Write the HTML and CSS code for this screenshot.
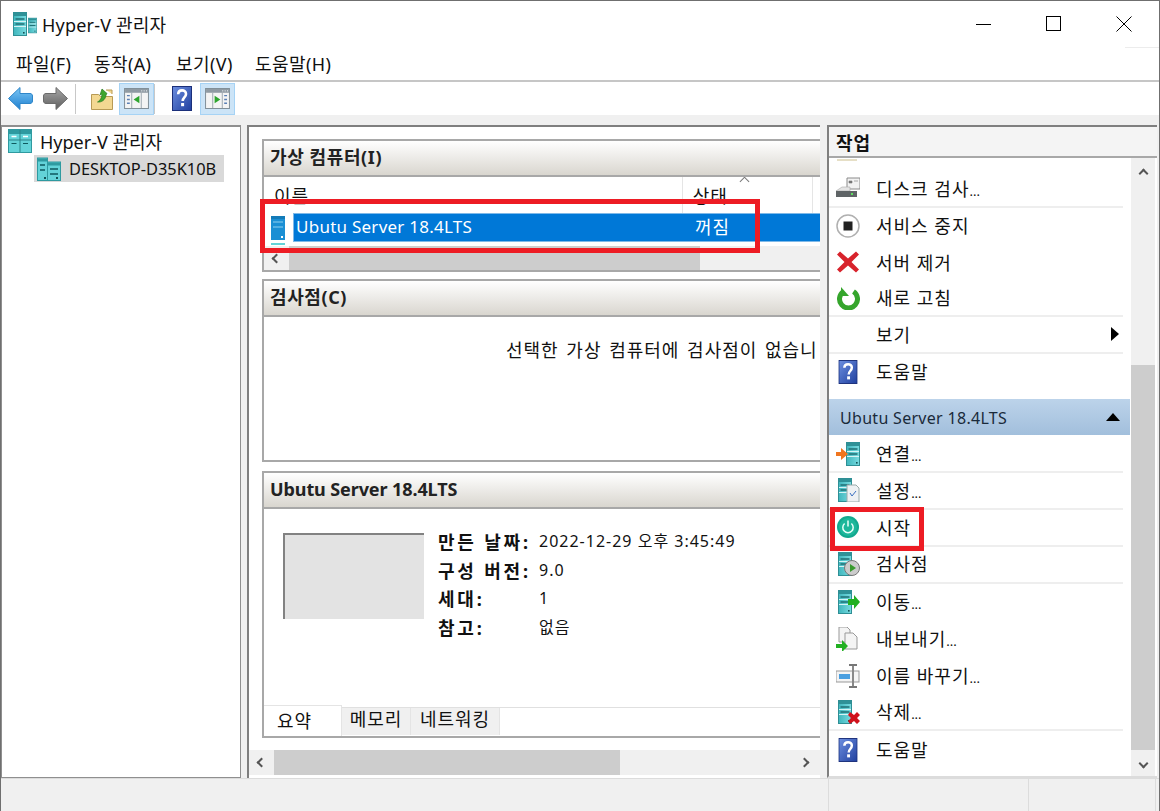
FILE: index.html
```html
<!DOCTYPE html>
<html lang="ko">
<head>
<meta charset="utf-8">
<title>Hyper-V 관리자</title>
<link rel="stylesheet" href="styles.css">
</head>
<body>
<svg class="defs" width="0" height="0" aria-hidden="true">
  <defs>
    <linearGradient id="teal" x1="0" y1="0" x2="1" y2="0"><stop offset="0" stop-color="#3fb6bd"/><stop offset="1" stop-color="#79dbe0"/></linearGradient>
    <linearGradient id="help" x1="0" y1="0" x2="1" y2="1"><stop offset="0" stop-color="#6d8fe0"/><stop offset="1" stop-color="#1f3f9e"/></linearGradient>
    <linearGradient id="blueArrow" x1="0" y1="0" x2="0" y2="1"><stop offset="0" stop-color="#7cc7f5"/><stop offset="1" stop-color="#1e7fd0"/></linearGradient>
    <linearGradient id="grayArrow" x1="0" y1="0" x2="0" y2="1"><stop offset="0" stop-color="#a8a8a8"/><stop offset="1" stop-color="#5e5e5e"/></linearGradient>
    <symbol id="srv" viewBox="0 0 14 24">
      <rect x=".5" y=".5" width="13" height="23" fill="url(#teal)" stroke="#2f8f95"/>
      <rect x="1" y="1" width="12" height="3" fill="#2f9197"/>
      <path d="M2.500 7h9M2.500 12h9" stroke="#1f6f74" stroke-width="1.500"/>
      <path d="M1 9.500h12M1 14.500h12" stroke="#d6f3f5"/>
      <rect x="10" y="20" width="1.600" height="1.600" fill="#145256"/>
    </symbol>
    <symbol id="help-i" viewBox="0 0 20 25">
      <rect x=".5" y=".5" width="19" height="24" fill="url(#help)" stroke="#1b2f7a"/>
      <path d="M6.200 8.200c0-5 7.800-5 7.800-.3 0 3.500-3.300 3.600-3.300 7.100" fill="none" stroke="#fff" stroke-width="2.600"/>
      <rect x="9.100" y="17" width="3" height="3.200" fill="#fff"/>
    </symbol>
    <symbol id="pane" viewBox="0 0 26 22">
      <rect x=".5" y=".5" width="25" height="21" fill="#f4f4f4" stroke="#7d8a94"/>
      <rect x="1" y="1" width="24" height="4" fill="#8f9aa3"/>
      <path d="M18 3h1M20.500 3h1M23 3h1" stroke="#fff"/>
      <path d="M8 5v16M18 5v16" stroke="#9aa6ae"/>
    </symbol>
    <symbol id="hv" viewBox="0 0 24 24">
      <rect x=".5" y=".5" width="23" height="23" fill="#63d3d8" stroke="#2f9aa0"/>
      <rect x="1" y="1" width="22" height="4" fill="#2f9aa0"/>
      <path d="M12 1v22M1 11h22" stroke="#2c8489"/>
      <path d="M3.500 7.500h5M15 7.500h5" stroke="#fff" stroke-width="1.500"/>
      <path d="M3.500 14.500h5M15 14.500h5" stroke="#0f5a5f" stroke-width="1.200"/>
    </symbol>
    <symbol id="host" viewBox="0 0 24 24">
      <rect x=".5" y="1" width="10" height="22.500" fill="#63d3d8" stroke="#2f9aa0"/>
      <rect x="10.500" y="5" width="13" height="18.500" fill="#63d3d8" stroke="#2f9aa0"/>
      <rect x="1" y="1.500" width="9" height="3" fill="#2f9aa0"/>
      <rect x="11" y="5.500" width="12" height="3" fill="#2f9aa0"/>
      <path d="M3 8h5M3 13h5M13 12h8M13 17h8" stroke="#0f5a5f" stroke-width="1.300"/>
      <rect x="7" y="20" width="2" height="2" fill="#145256"/><rect x="19" y="20" width="2" height="2" fill="#145256"/>
    </symbol>
  </defs>
</svg>

<div class="window">
  <header class="titlebar">
    <svg class="app-icon" viewBox="0 0 24 24"><use href="#srv" x="0" y="0" width="14" height="24"/><use href="#srv" x="15" y="4" width="9" height="19"/></svg>
    <span class="title">Hyper-V 관리자</span>
    <div class="winbtns">
      <svg class="wb" viewBox="0 0 16 16"><path d="M0 8.500h15" stroke="#000"/></svg>
      <svg class="wb" viewBox="0 0 16 16"><rect x=".5" y=".5" width="14" height="14" fill="none" stroke="#000"/></svg>
      <svg class="wb" viewBox="0 0 16 16"><path d="M.5.500l15 15M15.500.500l-15 15" stroke="#000" fill="none"/></svg>
    </div>
  </header>
  <nav class="menubar">
    <span class="menu">파일(F)</span><span class="menu">동작(A)</span><span class="menu">보기(V)</span><span class="menu">도움말(H)</span>
  </nav>
  <div class="toolbar">
    <span class="tool"><svg class="t-arrow" viewBox="0 0 25 23"><path d="M12 .5L.5 11.500 12 22.500v-6h10c1.500 0 2.500-1 2.500-2.500V9c0-1.500-1-2.500-2.500-2.500H12z" fill="url(#blueArrow)" stroke="#2f86c9"/></svg></span>
    <span class="tool tool-fwd"><svg class="t-arrow" viewBox="0 0 25 23"><path d="M13 .5l11.500 11L13 22.500v-6H3c-1.500 0-2.500-1-2.500-2.500V9c0-1.500 1-2.500 2.500-2.500h10z" fill="url(#grayArrow)" stroke="#6b6b6b"/></svg></span>
    <span class="sep sep-a"></span>
    <span class="tool tool-up"><svg class="t-folder" viewBox="0 0 22 23"><path d="M.5 7.500h7l2 2h12v13H.5z" fill="#f3d892" stroke="#b89a55"/><path d="M15 3h6v4" fill="#f3d892" stroke="#b89a55"/><path d="M16 6.500L11 2 9 8l1.500-1c1 2-.5 6-4 8 4 .5 8-2 8.500-7z" fill="#3fa52f" stroke="#2a7a20" stroke-width=".7"/></svg></span>
    <span class="tool-on"><svg class="t-pane" viewBox="0 0 26 22"><use href="#pane"/><path d="M16 8v8l-6-4z" fill="#2ea52e"/><path d="M3 8h3M3 12h3M3 16h3" stroke="#5b80b5" stroke-width="1.500"/></svg></span>
    <span class="sep"></span>
    <span class="tool tool-help"><svg class="t-help" viewBox="0 0 20 25"><use href="#help-i"/></svg></span>
    <span class="tool-on"><svg class="t-pane" viewBox="0 0 26 22"><use href="#pane"/><path d="M10 8v8l6-4z" fill="#2ea52e"/><path d="M20 8h3M20 12h3M20 16h3" stroke="#5b80b5" stroke-width="1.500"/></svg></span>
  </div>

  <div class="workspace">
    <aside class="tree">
      <div class="tree-root"><svg class="tree-icon" viewBox="0 0 24 24"><use href="#hv"/></svg><span>Hyper-V 관리자</span></div>
      <div class="tree-host"><svg class="tree-icon" viewBox="0 0 24 24"><use href="#host"/></svg><span>DESKTOP-D35K10B</span></div>
    </aside>

    <main class="center">
      <div class="center-scroll">
        <section class="card card-vm">
          <h2 class="card-head">가상 컴퓨터(I)</h2>
          <div class="vm-cols"><span class="col col-name">이름</span><span class="col col-state">상태<i class="sort"></i></span><span class="col col-rest"></span></div>
          <div class="vm-row">
            <svg class="vm-icon" viewBox="0 0 14 30"><rect x="0" y="1" width="14" height="24" fill="#1b8fd4"/><rect x="0" y="1" width="14" height="3" fill="#137bb8"/><path d="M2 7h10M2 12h10" stroke="#8fd0f0"/><rect x="10" y="21" width="2" height="2" fill="#fff"/><rect x="0" y="28" width="14" height="2" fill="#63d3d8"/></svg>
            <div class="vm-sel"><span class="vm-name">Ubutu Server 18.4LTS</span><span class="vm-state">꺼짐</span></div>
          </div>
          <div class="hscroll hscroll-vm"><span class="arrow"><i class="chev chev-l"></i></span><span class="thumb thumb-vm"></span></div>
        </section>
        <section class="card card-check">
          <h2 class="card-head">검사점(C)</h2>
          <div class="check-body"><span>선택한 가상 컴퓨터에 검사점이 없습니</span></div>
        </section>
        <section class="card card-detail">
          <h2 class="card-head head-latin">Ubutu Server 18.4LTS</h2>
          <div class="detail-body">
            <div class="thumbnail"></div>
            <dl class="facts">
              <dt>만든 날짜:</dt><dd>2022-12-29 오후 3:45:49</dd>
              <dt>구성 버전:</dt><dd>9.0</dd>
              <dt>세대:</dt><dd>1</dd>
              <dt>참고:</dt><dd>없음</dd>
            </dl>
          </div>
          <div class="tabs"><span class="tab tab-on">요약</span><span class="tab tab-mem">메모리</span><span class="tab tab-net">네트워킹</span></div>
        </section>
      </div>
      <div class="hscroll hscroll-main"><span class="arrow"><i class="chev chev-l"></i></span><span class="thumb thumb-main"></span><span class="arrow arrow-r"><i class="chev chev-r"></i></span></div>
    </main>

    <aside class="actions">
      <h2 class="actions-head">작업</h2>
      <div class="actions-body">
        <div class="action-list">
          <div class="action line"><svg class="a-icon" viewBox="0 0 24 24"><path d="M11 2h13v11H11z" fill="#f2f2f2" stroke="#8a8a8a"/><path d="M13 5h3v2h-3zM18 5h4" fill="#777" stroke="#777" stroke-width=".6"/><path d="M6 11h8v4H0z" fill="#e4e4e4" stroke="#aaa" stroke-width=".6"/><rect y="15" width="21" height="6" fill="#5f6466"/><rect x="15" y="17" width="2" height="2" fill="#5fe05f"/></svg><span class="a-text">디스크 검사<span class="dots">...</span></span></div>
          <div class="action"><svg class="a-icon" viewBox="0 0 24 24"><circle cx="12" cy="12" r="11" fill="#fff" stroke="#b0b0b0" stroke-width="1.500"/><rect x="7.500" y="7.500" width="9" height="9" fill="#222"/></svg><span class="a-text">서비스 중지</span></div>
          <div class="action"><svg class="a-icon" viewBox="0 0 24 24"><path d="M4 1.500l8 7 8-7 3 3-7.500 7.500 7.500 7.500-3 3-8-7-8 7-3-3L8.500 12 1 4.500z" fill="#d8232c"/></svg><span class="a-text">서버 제거</span></div>
          <div class="action line"><svg class="a-icon" viewBox="0 0 24 24"><path d="M7.500 5.500a9 9 0 1 0 10 0" fill="none" stroke="#35a52c" stroke-width="5"/><path d="M5 1v9h8z" fill="#35a52c"/></svg><span class="a-text">새로 고침</span></div>
          <div class="action line"><span class="no-icon"></span><span class="a-text">보기</span><i class="caret"></i></div>
          <div class="action"><svg class="a-icon a-help" viewBox="0 0 20 25"><use href="#help-i"/></svg><span class="a-text">도움말</span></div>
        </div>
        <div class="group-head"><span>Ubutu Server 18.4LTS</span><i class="caret-up"></i></div>
        <div class="action-list list-vm">
          <div class="action line"><svg class="a-icon" viewBox="0 0 24 24"><use href="#srv" x="10" y="0" width="14" height="24"/><path d="M0 10h5V6l7 6-7 6v-4H0z" fill="#f0761f"/></svg><span class="a-text">연결<span class="dots">...</span></span></div>
          <div class="action line"><svg class="a-icon" viewBox="0 0 24 24"><use href="#srv" x="2" y="0" width="14" height="24"/><path d="M11 7h9l3 3v14H11z" fill="#eef1f3" stroke="#9aa"/><path d="M14 15l2 3 4-5" stroke="#3a6fc0" fill="none"/></svg><span class="a-text">설정<span class="dots">...</span></span></div>
          <div class="action line"><svg class="a-icon" viewBox="0 0 24 24"><circle cx="12" cy="12" r="11" fill="#12a88e"/><circle cx="12" cy="12" r="9" fill="#1db79b"/><path d="M8.600 8.500a5.200 5.200 0 1 0 6.800 0M12 5.500v6" fill="none" stroke="#e8fff9" stroke-width="1.500"/></svg><span class="a-text">시작</span></div>
          <div class="action line"><svg class="a-icon" viewBox="0 0 24 24"><use href="#srv" x="2" y="0" width="14" height="24"/><circle cx="16" cy="16" r="7.500" fill="#ccc" stroke="#777"/><path d="M14 12l6 4-6 4z" fill="#3a9a2e"/></svg><span class="a-text">검사점</span></div>
          <div class="action"><svg class="a-icon" viewBox="0 0 24 24"><use href="#srv" x="2" y="0" width="14" height="24"/><path d="M12 9h6V5l6 7-6 7v-4h-6z" fill="#22b022"/></svg><span class="a-text">이동<span class="dots">...</span></span></div>
          <div class="action"><svg class="a-icon" viewBox="0 0 24 24"><path d="M3 0h8l3 3v12H3z" fill="#f4f4f4" stroke="#999"/><path d="M9 6h8l4 4v12H9z" fill="#f4f4f4" stroke="#999"/><path d="M0 17h6v-4l6 6-6 6v-4H0z" fill="#22b022"/></svg><span class="a-text">내보내기<span class="dots">...</span></span></div>
          <div class="action"><svg class="a-icon" viewBox="0 0 24 24"><rect x="0" y="7" width="23" height="11" fill="#f4f4f4" stroke="#999"/><rect x="3" y="10" width="11" height="5" fill="#4a9fe0"/><path d="M17 1v22" stroke="#888" stroke-width="2"/><path d="M13 0h8v2h-8zM13 22h8v2h-8z" fill="#777"/></svg><span class="a-text">이름 바꾸기<span class="dots">...</span></span></div>
          <div class="action line"><svg class="a-icon" viewBox="0 0 24 24"><use href="#srv" x="2" y="0" width="14" height="24"/><path d="M14 12l4 3 3-3 3 3-3 3 3 3-3 3-3-3-4 3-2-3 3-3-3-3z" fill="#d0121c"/></svg><span class="a-text">삭제<span class="dots">...</span></span></div>
          <div class="action"><svg class="a-icon a-help" viewBox="0 0 20 25"><use href="#help-i"/></svg><span class="a-text">도움말</span></div>
        </div>
        <div class="vscroll"><span class="v-arrow"><i class="chev chev-u"></i></span><span class="v-thumb"></span><span class="v-arrow v-down"><i class="chev chev-d"></i></span></div>
      </div>
    </aside>
  </div>

  <footer class="statusbar"><span class="st st-a"></span><span class="st st-b"></span><span class="st st-c"></span></footer>
  <span class="mark mark-vm"></span>
  <span class="mark mark-start"></span>
</div>
</body>
</html>
```
FILE: styles.css
```css
* { box-sizing: border-box; }
html, body { margin: 0; padding: 0; background: #fff; }
body { font: 18px/1.2 "Noto Sans", "Noto Sans CJK KR", sans-serif; color: #111; overflow: hidden; }
.defs { position: absolute; }
.window { position: relative; width: 1160px; height: 811px; display: flex; flex-direction: column; border: 1px solid #6f6f6f; border-bottom: 0; background: #fff; overflow: hidden; }

.titlebar { height: 47px; flex: none; display: flex; align-items: center; padding-left: 12px; position: relative; }
.titlebar::after { content: ""; position: absolute; right: 0; bottom: 0; width: 34px; height: 1px; background: #ececec; }
.app-icon { width: 24px; height: 24px; margin-top: -1px; }
.title { margin-left: 5px; font-size: 18px; letter-spacing: .2px; padding-top: 2px; }
.winbtns { margin-left: auto; display: flex; gap: 54px; padding-right: 27px; padding-bottom: 1px; }
.wb { width: 16px; height: 16px; }

.menubar { height: 34px; flex: none; display: flex; align-items: center; padding: 2px 0 0 15px; border-bottom: 2px solid #c6c6c6; }
.menu { width: 78px; font-size: 18px; letter-spacing: .4px; }
.menu:nth-child(2) { width: 82px; }
.menu:nth-child(3) { width: 79px; }

.toolbar { height: 33px; flex: none; display: flex; align-items: center; padding-left: 7px; }
.tool { display: flex; }
.t-arrow { width: 25px; height: 23px; display: block; }
.tool-fwd { margin-left: 10px; }
.tool-up { margin-left: 15px; margin-right: 6px; }
.tool-help { margin-left: 17px; margin-right: 8px; }
.t-folder { width: 22px; height: 23px; }
.t-help { width: 20px; height: 25px; }
.t-pane { width: 25px; height: 21px; }
.sep { width: 1px; height: 30px; background: #c8c8c8; }
.sep-a { margin-left: 7px; }
.tool-on { width: 35px; height: 32px; display: flex; align-items: center; justify-content: center; background: #cce4f7; border: 1px solid #a6d3f5; }

.workspace { flex: 1; min-height: 0; display: flex; background: #f0f0f0; padding-top: 10px; }
.tree { width: 240px; flex: none; background: #fff; border: 1px solid #8f8f8f; border-top-width: 2px; border-bottom-color: #8f8f8f; }
.tree-root { height: 28px; display: flex; align-items: center; gap: 8px; padding-left: 6px; }
.tree-root span { padding-top: 3px; }
.tree-host { height: 27px; width: 190px; margin-left: 32px; display: flex; align-items: center; gap: 8px; padding-left: 3px; background: #d9d9d9; font-size: 16.4px; }
.tree-icon { width: 24px; height: 24px; flex: none; }

.center { width: 573px; margin-left: 6px; flex: none; display: flex; flex-direction: column; background: #fff; border-top: 2px solid #7f7f7f; border-left: 2px solid #7f7f7f; overflow: hidden; }
.center-scroll { flex: 1; min-height: 0; padding: 12px 0 0 13px; }
.card { border: 2px solid #a8a8a8; border-right: 0; width: 562px; background: #fff; }
.card-head { margin: 0; height: 36px; display: flex; align-items: center; padding-left: 6px; font-size: 18px; font-weight: 700; letter-spacing: .6px; color: #222; background: linear-gradient(#fff, #d9d6cf); border-bottom: 2px solid #a8a8a8; }
.head-latin { letter-spacing: -.1px; }
.card-vm { height: 133px; overflow: hidden; }
.vm-cols { height: 36px; display: flex; overflow: hidden; }
.col { display: block; padding: 7px 0 0 10px; position: relative; border-right: 1px solid #e5e5e5; height: 36px; letter-spacing: 1px; }
.col-name, .col-state { padding-top: 9px; }
.col-name { width: 421px; }
.col-state { width: 131px; }
.sort { position: absolute; left: 58px; top: 1px; width: 7px; height: 7px; border-left: 1px solid #777; border-top: 1px solid #777; transform: rotate(45deg); }
.vm-row { height: 33px; display: flex; }
.vm-icon { width: 14px; height: 30px; margin: 2px 8px 0 7px; flex: none; }
.vm-sel { flex: 1; height: 29px; background: #0078d7; color: #fff; display: flex; align-items: center; border: 1px solid #7fb9e8; border-right: 0; font-size: 17px; letter-spacing: .25px; }
.vm-name { width: 401px; padding-left: 2px; flex: none; }
.vm-state { font-size: 18px; letter-spacing: 1px; }
.hscroll { display: flex; align-items: center; background: #f0f0f0; position: relative; }
.hscroll-vm { height: 24px; }
.arrow { width: 25px; height: 100%; flex: none; display: flex; align-items: center; justify-content: center; }
.chev { display: block; width: 7px; height: 7px; border: solid #555; border-width: 2px 0 0 2px; }
.chev-l { transform: rotate(-45deg); }
.chev-r { transform: rotate(135deg); }
.chev-u { transform: rotate(45deg); }
.chev-d { transform: rotate(225deg); }
.thumb { height: 100%; background: #cdcdcd; display: block; }
.thumb-vm { width: 411px; }
.card-check { height: 183px; margin-top: 7px; }
.check-body { height: 143px; padding: 23px 0 0 242px; white-space: nowrap; overflow: hidden; letter-spacing: 1px; word-spacing: 2px; }
.card-detail { height: 267px; margin-top: 9px; display: flex; flex-direction: column; }
.detail-body { flex: 1; display: flex; padding: 24px 0 0 19px; min-height: 0; }
.thumbnail { width: 141px; height: 86px; background: #e3e3e3; border-top: 2px solid #828282; border-left: 2px solid #828282; }
.facts { margin: -1px 0 0 14px; display: grid; grid-template-columns: 101px auto; grid-auto-rows: 28.6px; align-content: start; }
.facts dt { font-weight: 700; letter-spacing: 2.800px; }
.facts dd { margin: 0; font-size: 16px; letter-spacing: 1px; }
.tabs { height: 29px; flex: none; display: flex; align-items: flex-start; border-top: 1px solid #e0e0e0; }
.tab { display: flex; align-items: center; justify-content: center; height: 27px; background: #f0f0f0; border-right: 1px solid #e4e4e4; letter-spacing: 1px; padding-bottom: 4px; }
.tab-on { width: 78px; height: 31px; margin-top: -3px; background: #fff; border: 1px solid #e4e4e4; border-bottom: 0; border-left: 0; padding: 2px 16px 0 0; }
.tab-mem { width: 69px; }
.tab-net { width: 89px; }
.hscroll-main { height: 25px; flex: none; margin-bottom: 3px; }
.thumb-main { width: 346px; }
.arrow-r { position: absolute; right: 3px; top: 0; }

.actions { flex: 1; margin: 0 2px 0 7px; display: flex; flex-direction: column; background: #fff; border-top: 2px solid #7f7f7f; border-left: 2px solid #7f7f7f; border-bottom: 2px solid #dcdcdc; min-width: 0; }
.actions-head { margin: 0; height: 31px; flex: none; display: flex; align-items: center; padding: 5px 0 0 7px; font-size: 18px; font-weight: 700; letter-spacing: 1px; background: #f4f4f4; border-bottom: 2px solid #a8a8a8; }
.actions-body { flex: 1; position: relative; padding: 13px 27px 0 0; min-height: 0; overflow: hidden; }
.actions-body::before { content: ""; position: absolute; left: 8px; top: 1px; width: 20px; height: 2px; background: #e6dfc6; }
.action-list { display: flex; flex-direction: column; }
.action { height: 36.6px; margin-right: 7px; display: flex; align-items: center; padding-left: 7px; position: relative; letter-spacing: 1px; }
.a-text { padding-top: 2px; }
.list-vm { margin-top: 1px; }
.list-vm .action { height: 36.9px; }
.action.line { border-bottom: 2px solid #eee; }
.dots { font-size: 13px; letter-spacing: 0; }
.a-icon { width: 24px; height: 24px; flex: none; margin-right: 16px; }
.a-help { width: 20px; margin-left: 2px; margin-right: 18px; }
.no-icon { width: 40px; flex: none; }
.caret { position: absolute; right: 4px; top: 10px; border-left: 8px solid #000; border-top: 7px solid transparent; border-bottom: 7px solid transparent; }
.group-head { margin-top: 8px; height: 36.600px; display: flex; align-items: center; justify-content: space-between; padding: 4px 10px 0 11px; background: linear-gradient(#bcd3ea, #a2bfdc); font-size: 16px; letter-spacing: .3px; color: #1a2a3a; }
.caret-up { border-bottom: 8px solid #000; border-left: 7px solid transparent; border-right: 7px solid transparent; margin-top: -4px; }
.vscroll { position: absolute; top: 0; bottom: 0; right: 2px; width: 24px; background: #f0f0f0; }
.v-thumb { position: absolute; left: 0; right: 0; top: 207px; height: 385px; background: #cdcdcd; }
.v-arrow { position: absolute; top: 12px; left: 0; width: 100%; display: flex; justify-content: center; }
.v-down { top: auto; bottom: 9px; }

.statusbar { height: 33px; flex: none; display: flex; background: #f0f0f0; border-top: 1px solid #dcdcdc; }
.st { display: block; border-right: 1px solid #dcdcdc; }
.st-a { width: 828px; }
.st-b { width: 200px; }
.st-c { width: 127px; }

.mark { position: absolute; border: 5px solid #ed1c24; pointer-events: none; }
.mark-vm { left: 259px; top: 198px; width: 500px; height: 54px; }
.mark-start { left: 829px; top: 506px; width: 94px; height: 44px; }
```
